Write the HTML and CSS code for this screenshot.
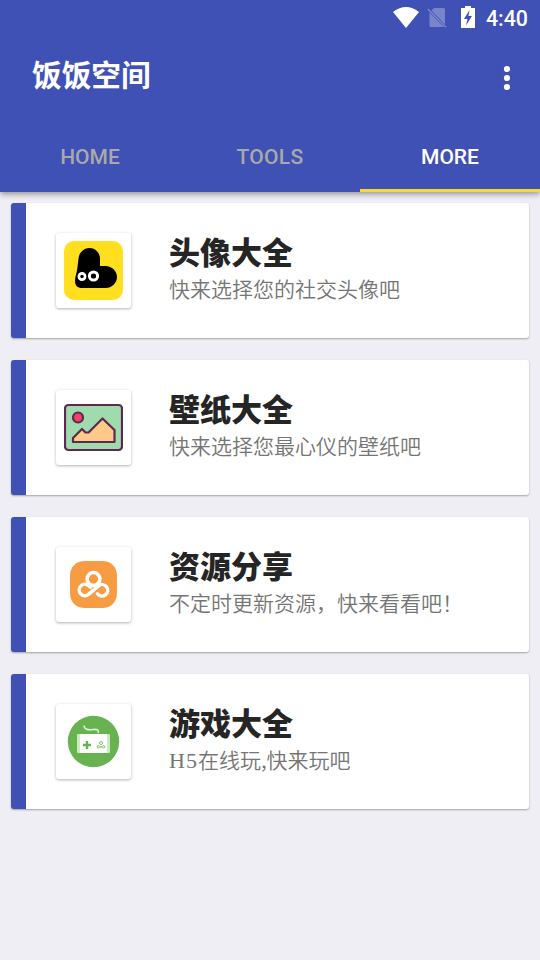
FILE: index.html
```html
<!DOCTYPE html>
<html lang="zh-CN">
<head>
<meta charset="utf-8">
<title>饭饭空间</title>
<link rel="stylesheet" href="styles.css">
</head>
<body>
<header class="header">
  <div class="status">
    <svg class="wifi" width="26" height="21" viewBox="0 0 26 21"><path d="M0 5Q13-5 26 5L13 21Z" fill="#fff"/></svg>
    <svg class="sim" width="20" height="22" viewBox="0 0 20 22"><path d="M7 1h9.500q1.500 0 1.500 1.500v15L4.500 3.500ZM2.500 5.500 17 20H4q-1.500 0-1.500-1.500Z" fill="#7985cb"/><path d="M.8 2 19 20.300" stroke="#7985cb" stroke-width="1.600"/></svg>
    <svg class="battery" width="14" height="22" viewBox="0 0 14 22"><path fill-rule="evenodd" d="M4 0h6v2h4v20H0V2h4ZM8.500 4 3 13h3.500l-1.500 6.500L11 10H7.500Z" fill="#fff"/></svg>
    <span class="clock">4:40</span>
  </div>
  <div class="toolbar">
    <h1 class="app-title">饭饭空间</h1>
    <svg class="menu" width="8" height="26" viewBox="0 0 8 26" fill="#fff"><circle cx="4" cy="4" r="3.100"/><circle cx="4" cy="13" r="3.100"/><circle cx="4" cy="22" r="3.100"/></svg>
  </div>
  <nav class="tabs">
    <a class="tab">HOME</a>
    <a class="tab">TOOLS</a>
    <a class="tab tab-active">MORE</a>
  </nav>
</header>
<main class="list">
  <section class="card">
    <div class="icon">
      <svg width="59" height="59" viewBox="0 0 59 59"><rect width="59" height="59" rx="10" fill="#ffdf20"/><path d="M14.500 17.500C15 11.500 20 7 25.500 7S36 11.500 36 17.500V25h5.500C48 25 53 30 53 36s-5 11-11.500 11H18c-4.500 0-7-2.500-7-7 0-4 2-9 2.500-14Z" fill="#000"/><circle cx="18" cy="35.500" r="3.100" fill="#000" stroke="#fff" stroke-width="2.700"/><circle cx="29.500" cy="35" r="4.100" fill="#000" stroke="#fff" stroke-width="3"/></svg>
    </div>
    <div class="copy"><h2 class="title">头像大全</h2><p class="desc">快来选择您的社交头像吧</p></div>
  </section>
  <section class="card">
    <div class="icon">
      <svg width="59" height="59" viewBox="0 0 59 59" stroke="#5a2a4f" stroke-width="2.200" stroke-linejoin="round"><rect x="1" y="7" width="57" height="45" rx="3.500" fill="#9fdbad"/><circle cx="14" cy="19.500" r="5" fill="#f2416b"/><path d="M9 44V40L18 31l3.500 3.500h3L38.500 20.500 50.500 32v12Z" fill="#ffc98a"/></svg>
    </div>
    <div class="copy"><h2 class="title">壁纸大全</h2><p class="desc">快来选择您最心仪的壁纸吧</p></div>
  </section>
  <section class="card">
    <div class="icon">
      <svg width="59" height="59" viewBox="0 0 59 59"><path d="M21 6h17c9 0 15 6 15 15v17c0 9-6 15-15 15H21C12 53 6 47 6 38V21C6 12 12 6 21 6Z" fill="#f89c43"/><g fill="none" stroke="#fff" stroke-width="3.500" stroke-linecap="round"><circle cx="29.500" cy="24" r="6.400"/><path d="M33.500 38.800A5.700 5.700 0 1 0 34.500 30.800L24.500 39.400A5.700 5.700 0 1 1 24.500 30.600L26.500 32.200"/></g></svg>
    </div>
    <div class="copy"><h2 class="title">资源分享</h2><p class="desc">不定时更新资源，快来看看吧！</p></div>
  </section>
  <section class="card">
    <div class="icon">
      <svg width="59" height="59" viewBox="0 0 59 59"><circle cx="29.500" cy="29.500" r="25.700" fill="#68b350"/><path d="M20 13.500c.5 4.500 5 4.500 9 4 4-.4 5.500 0 5.500 3.500" fill="none" stroke="#ddf4d6" stroke-width="1.600"/><rect x="13" y="22" width="33" height="19" rx="1" fill="#c7ecbd"/><path d="M16 22h27v19H16Z" fill="#fff"/><path d="M23 29v8M19 33h8" stroke="#68b350" stroke-width="2.400"/><g fill="none" stroke="#68b350" stroke-width=".8"><circle cx="37" cy="31" r="1.500"/><circle cx="34.300" cy="34.800" r="1.200"/><circle cx="39.700" cy="34.800" r="1.200"/><circle cx="37" cy="35" r=".6"/></g></svg>
    </div>
    <div class="copy"><h2 class="title">游戏大全</h2><p class="desc"><span class="latin">H5</span>在线玩,快来玩吧</p></div>
  </section>
</main>
</body>
</html>
```
FILE: styles.css
```css
* { box-sizing: border-box; }
body {
  margin: 0;
  min-height: 960px;
  background: #efeef4;
  font-family: Roboto, "Noto Sans CJK SC", sans-serif;
}
h1, h2, p { margin: 0; }
svg { display: block; flex: none; }
.header {
  height: 192px;
  background: #3f51b5;
  color: #fff;
  box-shadow: 0 2px 6px rgba(0, 0, 0, .4);
}
.status {
  height: 36px;
  display: flex;
  align-items: flex-start;
  justify-content: flex-end;
  padding: 6px 12px 0 0;
}
.wifi { margin: 1px 8px 0 0; }
.sim { margin: 1px 14px 0 0; }
.battery { margin-right: 11px; }
.clock {
  font-size: 21.400px;
  line-height: 25px;
  font-weight: 500;
}
.toolbar {
  height: 84px;
  display: flex;
  align-items: center;
  justify-content: space-between;
  padding: 0 29px 0 32px;
}
.app-title {
  font: 700 29.700px/40px "Noto Sans CJK SC", sans-serif;
  margin-top: -9px;
}
.tabs {
  height: 72px;
  display: grid;
  grid-template-columns: repeat(3, 1fr);
}
.tab {
  font-size: 21px;
  font-weight: 500;
  line-height: 74px;
  text-align: center;
  color: #a9a9a9;
  height: 72px;
}
.tab:nth-child(2) { letter-spacing: .3px; }
.tab-active {
  color: #fff;
  border-bottom: 3px solid #fdd926;
}
.list {
  display: flex;
  flex-direction: column;
  gap: 22px;
  padding: 11px;
}
.card {
  height: 135px;
  display: flex;
  align-items: flex-start;
  background: #fff;
  border-left: 15px solid #3f51b5;
  border-radius: 3px;
  box-shadow: 0 1px 2px rgba(0, 0, 0, .32);
  padding: 30px 0 0 30px;
}
.icon {
  width: 75px;
  height: 75px;
  flex: none;
  display: grid;
  place-items: center;
  background: #fff;
  border-radius: 3px;
  box-shadow: 0 1px 3px rgba(0, 0, 0, .3);
}
.copy { margin: -2px 0 0 38px; }
.title {
  font: 900 31px/40px "Noto Sans CJK SC", sans-serif;
  color: #252525;
}
.desc {
  font: 350 21px/32px "Noto Sans CJK SC", sans-serif;
  margin-top: 1px;
  color: #757575;
  white-space: nowrap;
}
.latin {
  font-family: "Liberation Serif", serif;
  font-size: 22px;
  letter-spacing: 1px;
}
```
